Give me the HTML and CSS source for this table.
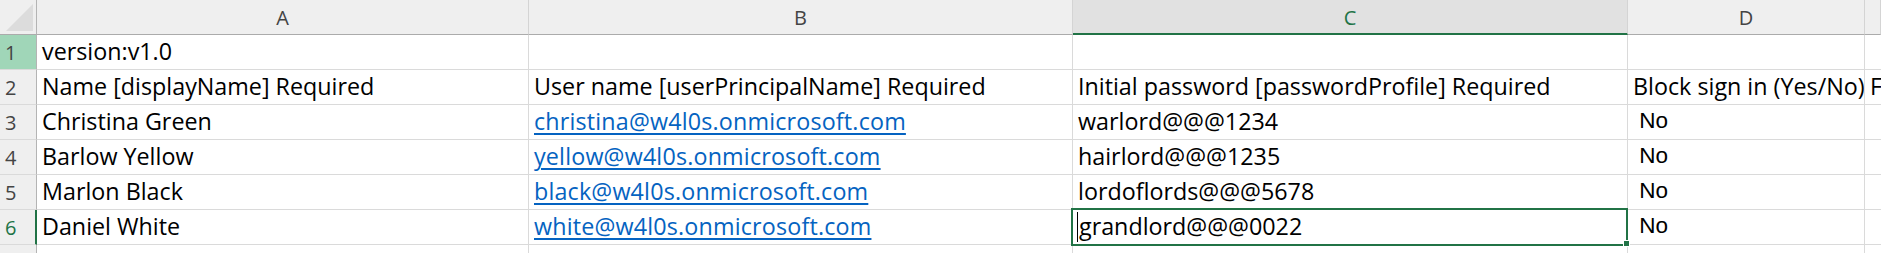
FILE: index.html
```html
<!DOCTYPE html>
<html>
<head>
<meta charset="utf-8">
<link rel="stylesheet" href="styles.css">
</head>
<body>
<div class="sheet">
  <div class="corner"><span class="tri"></span></div>
  <div class="colhead">A</div>
  <div class="colhead">B</div>
  <div class="colhead sel">C</div>
  <div class="colhead">D</div>
  <div class="colhead"></div>

  <div class="rowhead active">1</div>
  <div class="cell">version:v1.0</div>
  <div class="cell"></div>
  <div class="cell"></div>
  <div class="cell"></div>
  <div class="cell"></div>

  <div class="rowhead">2</div>
  <div class="cell">Name [displayName] Required</div>
  <div class="cell">User name [userPrincipalName] Required</div>
  <div class="cell">Initial password [passwordProfile] Required</div>
  <div class="cell">Block sign in (Yes/No)</div>
  <div class="cell">F</div>

  <div class="rowhead">3</div>
  <div class="cell">Christina Green</div>
  <div class="cell"><span class="link">christina@w4l0s.onmicrosoft.com</span></div>
  <div class="cell">warlord@@@1234</div>
  <div class="cell arial"> No</div>
  <div class="cell"></div>

  <div class="rowhead">4</div>
  <div class="cell">Barlow Yellow</div>
  <div class="cell"><span class="link">yellow@w4l0s.onmicrosoft.com</span></div>
  <div class="cell">hairlord@@@1235</div>
  <div class="cell arial"> No</div>
  <div class="cell"></div>

  <div class="rowhead">5</div>
  <div class="cell">Marlon Black</div>
  <div class="cell"><span class="link">black@w4l0s.onmicrosoft.com</span></div>
  <div class="cell">lordoflords@@@5678</div>
  <div class="cell arial"> No</div>
  <div class="cell"></div>

  <div class="rowhead cur">6</div>
  <div class="cell">Daniel White</div>
  <div class="cell"><span class="link">white@w4l0s.onmicrosoft.com</span></div>
  <div class="cell editing"><span class="caret"></span>grandlord@@@0022<span class="handle"></span></div>
  <div class="cell arial"> No</div>
  <div class="cell"></div>

  <div class="rowhead"></div>
  <div class="cell"></div>
  <div class="cell"></div>
  <div class="cell"></div>
  <div class="cell"></div>
  <div class="cell"></div>
</div>
</body>
</html>
```

FILE: styles.css
```css
html, body {
  margin: 0;
  padding: 0;
  background: #ffffff;
  overflow: hidden;
}

.sheet {
  display: grid;
  grid-template-columns: 37px 492px 544px 555px 237px 16px;
  grid-template-rows: repeat(8, 35px);
  width: 1881px;
  height: 253px;
  overflow: hidden;
  font-family: "Open Sans", "Noto Sans", sans-serif;
}

.corner {
  background: #efefef;
  border-right: 1px solid #b4b4b4;
  border-bottom: 1px solid #ababab;
  box-sizing: border-box;
  position: relative;
}

.corner .tri {
  position: absolute;
  right: 3px;
  bottom: 3px;
  width: 0;
  height: 0;
  border-left: 27px solid transparent;
  border-bottom: 27px solid #dcdcdc;
}

.colhead {
  background: #efefef;
  border-right: 1px solid #d4d4d4;
  border-bottom: 1px solid #ababab;
  box-sizing: border-box;
  text-align: center;
  font-size: 20px;
  line-height: 36px;
  color: #444444;
  overflow: hidden;
}

.colhead.sel {
  background: #e1e1e1;
  color: #217346;
  border-bottom: 2px solid #217346;
}

.rowhead {
  background: #efefef;
  border-right: 1px solid #b4b4b4;
  border-bottom: 1px solid #dadada;
  box-sizing: border-box;
  font-size: 20px;
  line-height: 36px;
  color: #444444;
  padding-left: 5px;
}

.rowhead.active {
  background: #a0d6b8;
}

.rowhead.cur {
  color: #217346;
  border-right: 2px solid #217346;
}

.cell {
  border-right: 1px solid #dadada;
  border-bottom: 1px solid #dadada;
  box-sizing: border-box;
  padding-left: 5px;
  font-size: 23.3px;
  line-height: 32px;
  color: #000000;
  white-space: pre;
  overflow: hidden;
}

.sheet > .cell:nth-child(6n) {
  border-right: none;
}

.cell.arial {
  font-family: "Liberation Sans", Arial, sans-serif;
  font-size: 22.5px;
}

.link {
  color: #0563c1;
  text-decoration: underline;
  text-decoration-thickness: 2px;
  text-underline-offset: 3px;
  letter-spacing: 0.17px;
}

.cell.editing {
  position: relative;
  overflow: visible;
  padding-left: 6px;
}

.cell.editing::after {
  content: "";
  position: absolute;
  left: -2px;
  top: -2px;
  right: -1px;
  bottom: -2px;
  border: 2px solid #217346;
  pointer-events: none;
}

.caret {
  position: absolute;
  left: 4px;
  top: 2px;
  width: 1px;
  height: 30px;
  background: #000000;
}

.handle {
  position: absolute;
  right: -3px;
  bottom: -3px;
  width: 5px;
  height: 5px;
  background: #217346;
  border: 1px solid #ffffff;
  z-index: 2;
}
```
